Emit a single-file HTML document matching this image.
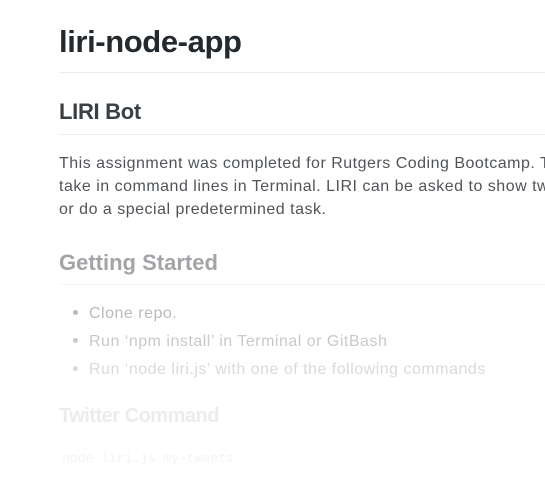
<!DOCTYPE html>
<html><head><style>
html,body{margin:0;padding:0;background:#fff;width:545px;height:479px;overflow:hidden;position:relative;font-family:"Liberation Sans",sans-serif;}
.a{position:absolute;white-space:nowrap;left:59px;}
.hr{position:absolute;left:59px;right:0;height:1px;}
</style></head><body>
<div class="a" style="top:24px;font-size:31px;font-weight:bold;color:#24292e;letter-spacing:-0.4px">liri-node-app</div>
<div class="hr" style="top:72px;background:#eaecef"></div>
<div class="a" style="top:99px;font-size:22px;font-weight:bold;color:#3a3f44;letter-spacing:-0.3px">LIRI Bot</div>
<div class="hr" style="top:134px;background:#eceef0"></div>
<div class="a" style="top:152px;font-size:16px;line-height:23px;color:#505458;letter-spacing:0.5px">This assignment was completed for Rutgers Coding Bootcamp. The<br>take in command lines in Terminal. LIRI can be asked to show two<br>or do a special predetermined task.</div>
<div class="a" style="top:250px;font-size:22px;font-weight:bold;color:#a2a4a7;letter-spacing:0px">Getting Started</div>
<div class="hr" style="top:284px;background:#f4f5f6"></div>
<div class="a" style="top:300px;font-size:16px;line-height:28px;letter-spacing:0.5px">
<div style="color:#b9babc"><span style="display:inline-block;width:5px;height:5px;border-radius:50%;background:#b9babc;margin:0 11px 3px 14px"></span>Clone repo.</div>
<div style="color:#c8c9cb"><span style="display:inline-block;width:5px;height:5px;border-radius:50%;background:#c8c9cb;margin:0 11px 3px 14px"></span>Run ‘npm install’ in Terminal or GitBash</div>
<div style="color:#d9dadb"><span style="display:inline-block;width:5px;height:5px;border-radius:50%;background:#d9dadb;margin:0 11px 3px 14px"></span>Run ‘node liri.js’ with one of the following commands</div>
</div>
<div class="a" style="top:405px;font-size:20px;font-weight:bold;color:#ececed;letter-spacing:-0.5px">Twitter Command</div>
<div class="a" style="top:451px;left:62px;font-family:'Liberation Mono',monospace;font-size:13px;color:#f3f3f4">node liri.js my-tweets</div>
</body></html>
